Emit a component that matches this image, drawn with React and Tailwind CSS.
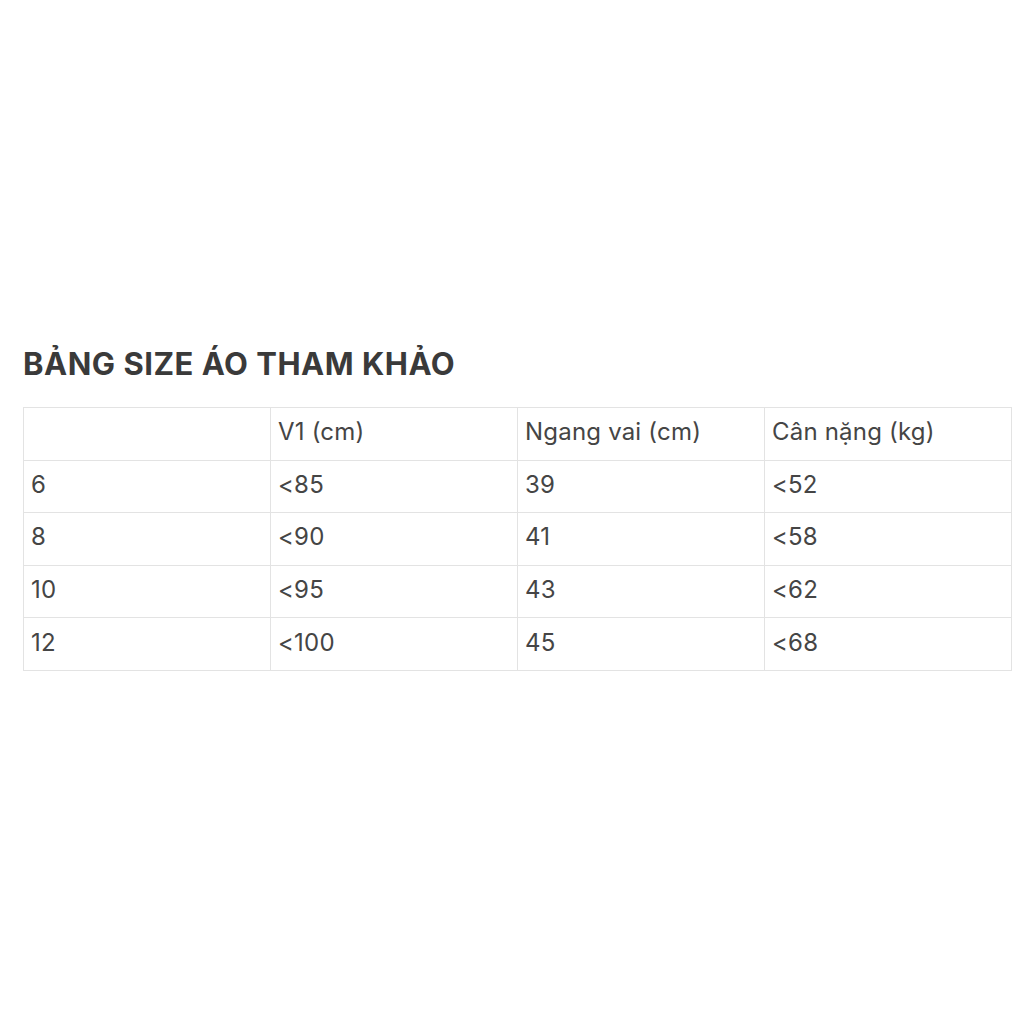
const rows = [
  ['', 'V1 (cm)', 'Ngang vai (cm)', 'Cân nặng (kg)'],
  ['6', '<85', '39', '<52'],
  ['8', '<90', '41', '<58'],
  ['10', '<95', '43', '<62'],
  ['12', '<100', '45', '<68'],
]

export default function App() {
  return (
    <div className="flex h-[1024px] w-[1024px] flex-col bg-white pt-[341px] pl-[23px] font-['Inter',sans-serif]">
      <h1 className="text-[31px] font-bold leading-[46px] tracking-[0.5px] text-[#3a3a3a]">BẢNG SIZE ÁO THAM KHẢO</h1>
      <table className="mt-[20px] w-[989px] table-fixed border-collapse text-[24px] tracking-[0.2px] text-[#454545]">
        <tbody>
          {rows.map((r, i) => (
            <tr key={i} className="h-[52.6px]">
              {r.map((c, j) => (
                <td key={j} className="border border-[#e3e3e3] px-[7px] pb-[3px] align-middle">
                  {c}
                </td>
              ))}
            </tr>
          ))}
        </tbody>
      </table>
    </div>
  )
}
